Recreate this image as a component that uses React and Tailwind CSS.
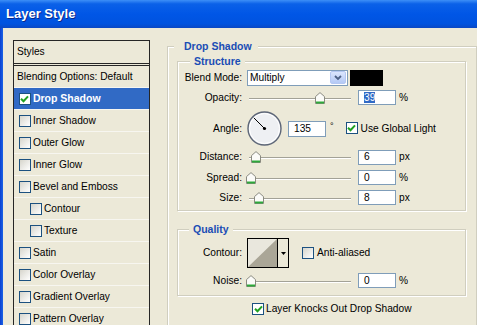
import React from 'react';

// Layer Style dialog (Photoshop on Windows XP)

const styleRows = [
  { label: 'Inner Shadow' },
  { label: 'Outer Glow' },
  { label: 'Inner Glow' },
  { label: 'Bevel and Emboss' },
  { label: 'Contour', indent: true },
  { label: 'Texture', indent: true },
  { label: 'Satin' },
  { label: 'Color Overlay' },
  { label: 'Gradient Overlay' },
  { label: 'Pattern Overlay' },
];

function CheckBox({ checked }) {
  return (
    <span
      className={
        checked
          ? 'flex h-[12px] w-[12px] shrink-0 items-center justify-center border border-[#1c5180] bg-white'
          : 'flex h-[12px] w-[12px] shrink-0 items-center justify-center border border-[#1c5180] bg-[linear-gradient(135deg,#d6d5cc,#ffffff)]'
      }
    >
      {checked && (
        <svg width="9" height="8" viewBox="0 0 9 8">
          <path d="M1 3.8 L3.5 6.3 L8 1.4" fill="none" stroke="#21a121" strokeWidth="2" />
        </svg>
      )}
    </span>
  );
}

function Thumb() {
  return (
    <svg width="10" height="12" viewBox="0 0 10 12">
      <path d="M0.5 11.5 V4.6 L5 0.6 L9.5 4.6 V11.5 Z" fill="#fbfbf8" stroke="#8a8a80" />
      <path d="M1 10.5 H9" stroke="#2ea83a" strokeWidth="2" />
    </svg>
  );
}

function Slider({ at }) {
  return (
    <div className="relative ml-[4px] h-full w-[105px]">
      <div className="absolute left-[3px] right-0 top-1/2 h-[1px] bg-[#a3a297] shadow-[0_1px_0_#ffffff]" />
      <div className={`absolute top-1/2 -translate-y-1/2 ${at}`}>
        <Thumb />
      </div>
    </div>
  );
}

function NumBox({ value, selected }) {
  return (
    <div className="ml-[7px] flex h-[15px] w-[38px] items-center border border-[#7f9db9] bg-white pl-[5px]">
      {selected ? <span className="bg-[#316ac5] leading-[11px] text-white">{value}</span> : value}
    </div>
  );
}

function Label({ children }) {
  return <div className="w-[64px] shrink-0 text-right">{children}</div>;
}

function Group({ title, titleAt, className, children }) {
  return (
    <div className={`relative border border-[#d0cebf] shadow-[inset_1px_1px_0_#ffffff,1px_1px_0_#ffffff] ${className}`}>
      <span className={`absolute top-[-8px] bg-[#ece9d8] font-bold text-[#1a4db5] ${titleAt}`}>{title}</span>
      {children}
    </div>
  );
}

export default function App() {
  return (
    <div className="h-[325px] w-[477px] overflow-hidden bg-[#ece9d8] font-['Liberation_Sans',Arial,sans-serif] text-[10.2px] text-black">
      {/* title bar */}
      <div className="flex h-[28px] items-center bg-[linear-gradient(180deg,#3d8ff7_0%,#0b61e8_14%,#0056e6_50%,#0053df_85%,#0a48c4_100%)] pl-[6px]">
        <span className="text-[13px] font-bold text-white [text-shadow:1px_1px_0_#0b2a8c]">Layer Style</span>
      </div>

      <div className="flex h-[297px] items-start">
        <div className="h-full w-[3px] bg-[linear-gradient(90deg,#0a3fd0,#1a63e6)]" />

        {/* styles list */}
        <div className="ml-[10px] mt-[12px] w-[139px] border border-[#262626]">
          <div className="flex h-[23px] items-center border-b border-[#262626] pl-[3px]">Styles</div>
          <div className="h-[2px] border-b border-[#262626]" />
          <div className="flex h-[22px] items-center border-b border-[#f7f6f0] pl-[3px]">Blending Options: Default</div>
          <div className="flex h-[22px] items-center border-b border-[#f7f6f0] bg-[#316ac5] pl-[5px]">
            <CheckBox checked />
            <span className="ml-[2px] text-[10.5px] font-bold text-white">Drop Shadow</span>
          </div>
          {styleRows.map((r) => (
            <div
              key={r.label}
              className={`flex h-[22px] items-center border-b border-[#f7f6f0] ${r.indent ? 'pl-[16px]' : 'pl-[5px]'}`}
            >
              <CheckBox />
              <span className="ml-[2px]">{r.label}</span>
            </div>
          ))}
        </div>

        {/* drop shadow settings */}
        <div className="ml-[17px] mt-[18px]">
          <div className="relative h-[300px] w-[310px] border-l border-r border-t border-[#d0cebf] shadow-[inset_1px_1px_0_#ffffff]">
            <span className="absolute left-[6px] top-[-8px] bg-[#ece9d8] pl-[10px] pr-[6px] text-[10.5px] font-bold text-[#1a4db5]">
              Drop Shadow
            </span>

            <Group title="Structure" titleAt="left-[12px] px-[4px] text-[10.5px]" className="ml-[9px] mt-[14px] h-[150px] w-[289px]">
              <div className="pt-[7px]">
                <div className="flex h-[17px] items-center">
                  <Label>Blend Mode:</Label>
                  <div className="ml-[5px] flex h-[16px] w-[101px] items-center border border-[#7f9db9] bg-white">
                    <span className="flex-1 pl-[2px]">Multiply</span>
                    <div className="mr-[1px] flex h-[13px] w-[16px] items-center justify-center rounded-[2px] border border-[#b5c8f2] bg-[linear-gradient(180deg,#dbe6fd,#b4c9f5)]">
                      <svg width="8" height="6" viewBox="0 0 8 6">
                        <path d="M1 1 L4 4 L7 1" fill="none" stroke="#4d6185" strokeWidth="1.8" />
                      </svg>
                    </div>
                  </div>
                  <div className="ml-[2px] h-[16px] w-[33px] bg-black" />
                </div>

                <div className="mt-[4px] flex h-[15px] items-center">
                  <Label>Opacity:</Label>
                  <Slider at="left-[69px]" />
                  <NumBox value="39" selected />
                  <span className="ml-[3px]">%</span>
                </div>

                <div className="mt-[6px] flex h-[35px] items-center">
                  <Label>Angle:</Label>
                  <svg className="ml-[5px]" width="35" height="35" viewBox="0 0 35 35">
                    <circle cx="17.5" cy="17.5" r="16.5" fill="#eef0f3" stroke="#5d6677" strokeWidth="1.4" />
                    <circle cx="17.5" cy="17.5" r="15" fill="none" stroke="#ffffff" strokeWidth="1" />
                    <path d="M17.5 17.5 L6.8 6.8" stroke="#000" strokeWidth="1" />
                    <circle cx="17.5" cy="17.5" r="1.6" fill="#000" />
                  </svg>
                  <div className="ml-[6px] flex h-[16px] w-[38px] items-center border border-[#7f9db9] bg-white pl-[5px]">135</div>
                  <span className="ml-[4px] self-start pt-[9px] text-[9px]">°</span>
                  <div className="ml-[12px] flex items-center">
                    <CheckBox checked />
                    <span className="ml-[3px]">Use Global Light</span>
                  </div>
                </div>

                <div className="mt-[3px] flex h-[16px] items-center">
                  <Label>Distance:</Label>
                  <Slider at="left-[5px]" />
                  <NumBox value="6" />
                  <span className="ml-[3px]">px</span>
                </div>

                <div className="mt-[5px] flex h-[15px] items-center">
                  <Label>Spread:</Label>
                  <Slider at="left-[0px]" />
                  <NumBox value="0" />
                  <span className="ml-[3px]">%</span>
                </div>

                <div className="mt-[5px] flex h-[15px] items-center">
                  <Label>Size:</Label>
                  <Slider at="left-[8px]" />
                  <NumBox value="8" />
                  <span className="ml-[3px]">px</span>
                </div>
              </div>
            </Group>

            <Group title="Quality" titleAt="left-[11px] px-[4px] text-[10.5px]" className="ml-[9px] mt-[18px] h-[67px] w-[289px]">
              <div className="pt-[8px]">
                <div className="flex h-[30px] items-center">
                  <Label>Contour:</Label>
                  <div className="ml-[5px] flex h-[30px] w-[42px] border border-black">
                    <svg width="29" height="28" viewBox="0 0 29 28" className="bg-[#e9e7dd]">
                      <path d="M0 28 L29 0 L29 28 Z" fill="#aaa697" />
                    </svg>
                    <div className="flex flex-1 items-center justify-center border-l border-black bg-[#ece9d8]">
                      <svg width="5" height="3" viewBox="0 0 5 3">
                        <path d="M0 0 H5 L2.5 3 Z" fill="#000" />
                      </svg>
                    </div>
                  </div>
                  <div className="ml-[13px] flex items-center">
                    <CheckBox />
                    <span className="ml-[3px]">Anti-aliased</span>
                  </div>
                </div>

                <div className="mt-[5px] flex h-[15px] items-center">
                  <Label>Noise:</Label>
                  <Slider at="left-[0px]" />
                  <NumBox value="0" />
                  <span className="ml-[3px]">%</span>
                </div>
              </div>
            </Group>

            <div className="ml-[84px] mt-[7px] flex h-[12px] items-center">
              <CheckBox checked />
              <span className="ml-[2px]">Layer Knocks Out Drop Shadow</span>
            </div>
          </div>
        </div>
      </div>
    </div>
  );
}
